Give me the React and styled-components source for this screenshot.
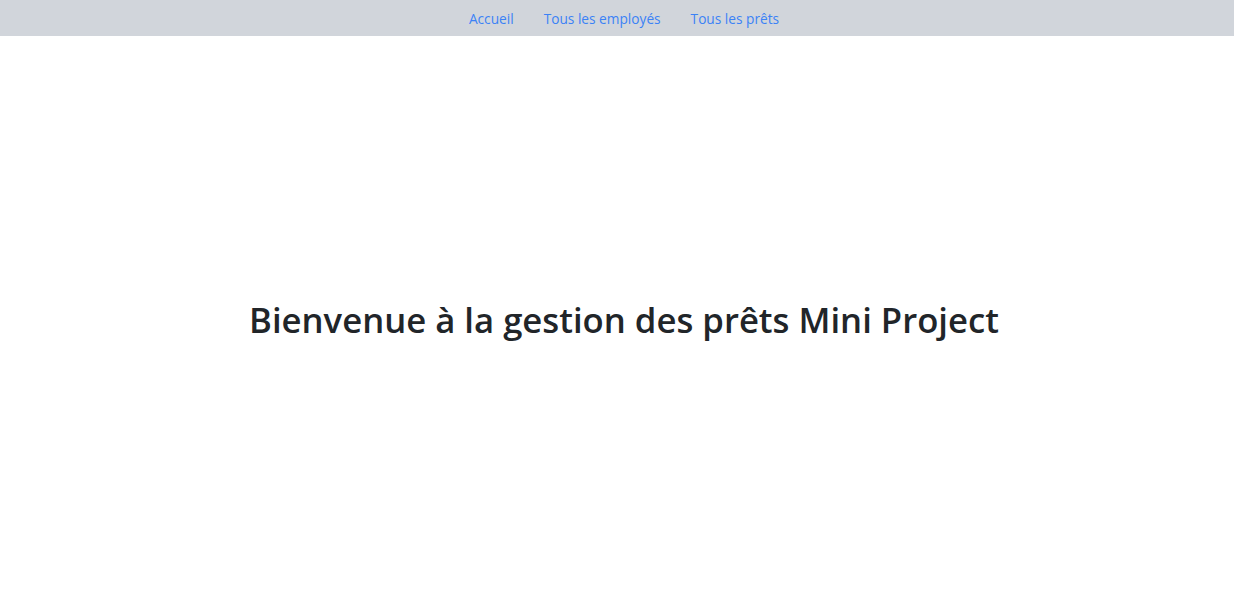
import React from "react";
import styled, { createGlobalStyle } from "styled-components";

const Global = createGlobalStyle`
  html, body { margin: 0; padding: 0; background: #ffffff; }
  body { font-family: "Open Sans", "Noto Sans", sans-serif; color: #212529; }
  * { box-sizing: border-box; }
`;

const Page = styled.div`
  display: flex;
  flex-direction: column;
  min-height: 606px;
`;

const NavBar = styled.nav`
  height: 36px;
  background: #d1d5db;
  display: flex;
  justify-content: center;
  align-items: center;
  gap: 30px;
  padding-left: 14px;
`;

const NavLink = styled.a`
  font-size: 13.7px;
  color: #3b82f6;
  text-decoration: none;
  cursor: pointer;
  padding-top: 1px;
`;

const Main = styled.main`
  flex: 1;
  display: flex;
  align-items: center;
  justify-content: center;
  padding-left: 14px;
  padding-bottom: 4px;
`;

const Title = styled.h1`
  margin: 0;
  font-size: 34.7px;
  font-weight: 600;
  color: #212529;
  letter-spacing: 0;
`;

export default function App() {
  return (
    <>
      <Global />
      <Page>
        <NavBar>
          <NavLink>Accueil</NavLink>
          <NavLink>Tous les employés</NavLink>
          <NavLink>Tous les prêts</NavLink>
        </NavBar>
        <Main>
          <Title>Bienvenue à la gestion des prêts Mini Project</Title>
        </Main>
      </Page>
    </>
  );
}
